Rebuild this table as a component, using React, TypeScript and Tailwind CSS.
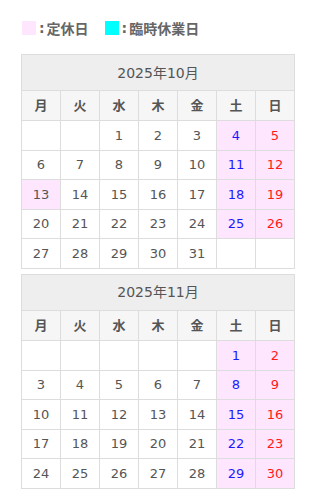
const weekdays = ['月', '火', '水', '木', '金', '土', '日']

type Month = {
  title: string
  offset: number
  days: number
  holidays: number[]
}

const months: Month[] = [
  { title: '2025年10月', offset: 2, days: 31, holidays: [13] },
  { title: '2025年11月', offset: 5, days: 30, holidays: [] },
]

function Calendar({ month }: { month: Month }) {
  const cells: (number | null)[] = []
  for (let i = 0; i < month.offset; i++) cells.push(null)
  for (let d = 1; d <= month.days; d++) cells.push(d)
  while (cells.length % 7 !== 0) cells.push(null)

  return (
    <div className="w-[274px] border-l border-t border-[#dddddd] text-[13px] text-[#555555]">
      <div className="flex h-[36px] items-center justify-center border-b border-r border-[#dddddd] bg-[#eeeeee] pt-[1px] text-[14px]">
        {month.title}
      </div>
      <div className="grid grid-cols-7">
        {weekdays.map((w) => (
          <div
            key={w}
            className="flex h-[30px] items-center justify-center border-b border-r border-[#dddddd] bg-[#f6f6f6] font-bold"
          >
            {w}
          </div>
        ))}
        {cells.map((d, i) => {
          const col = i % 7
          const closed = d !== null && (col >= 5 || month.holidays.includes(d))
          const color = col === 5 ? 'text-[#1a1aff]' : col === 6 ? 'text-[#ff1a1a]' : ''
          return (
            <div
              key={i}
              className={`flex h-[29.6px] items-center justify-center border-b border-r border-[#dddddd] ${closed ? 'bg-[#ffe6ff]' : 'bg-white'} ${color}`}
            >
              {d}
            </div>
          )
        })}
      </div>
    </div>
  )
}

export default function App() {
  return (
    <div
      className="min-h-[500px] bg-white pl-[21px] pt-[21px]"
      style={{ fontFamily: '"DejaVu Sans", "Noto Sans CJK JP", sans-serif' }}
    >
      <div className="flex h-[14px] items-center text-[14px] font-bold text-[#666666]">
        <span className="ml-[1px] h-[14px] w-[14px] bg-[#ffe6ff]" />
        <span className="ml-[3px]">:</span>
        <span className="ml-[2px]" style={{ fontFamily: '"Noto Sans CJK JP", sans-serif' }}>定休日</span>
        <span className="ml-[16px] h-[14px] w-[14px] bg-[#00ffff]" />
        <span className="ml-[3px]">:</span>
        <span className="ml-[2px]" style={{ fontFamily: '"Noto Sans CJK JP", sans-serif' }}>臨時休業日</span>
      </div>

      <div className="mt-[19px] flex flex-col gap-[5px]">
        {months.map((m) => (
          <Calendar key={m.title} month={m} />
        ))}
      </div>
    </div>
  )
}
